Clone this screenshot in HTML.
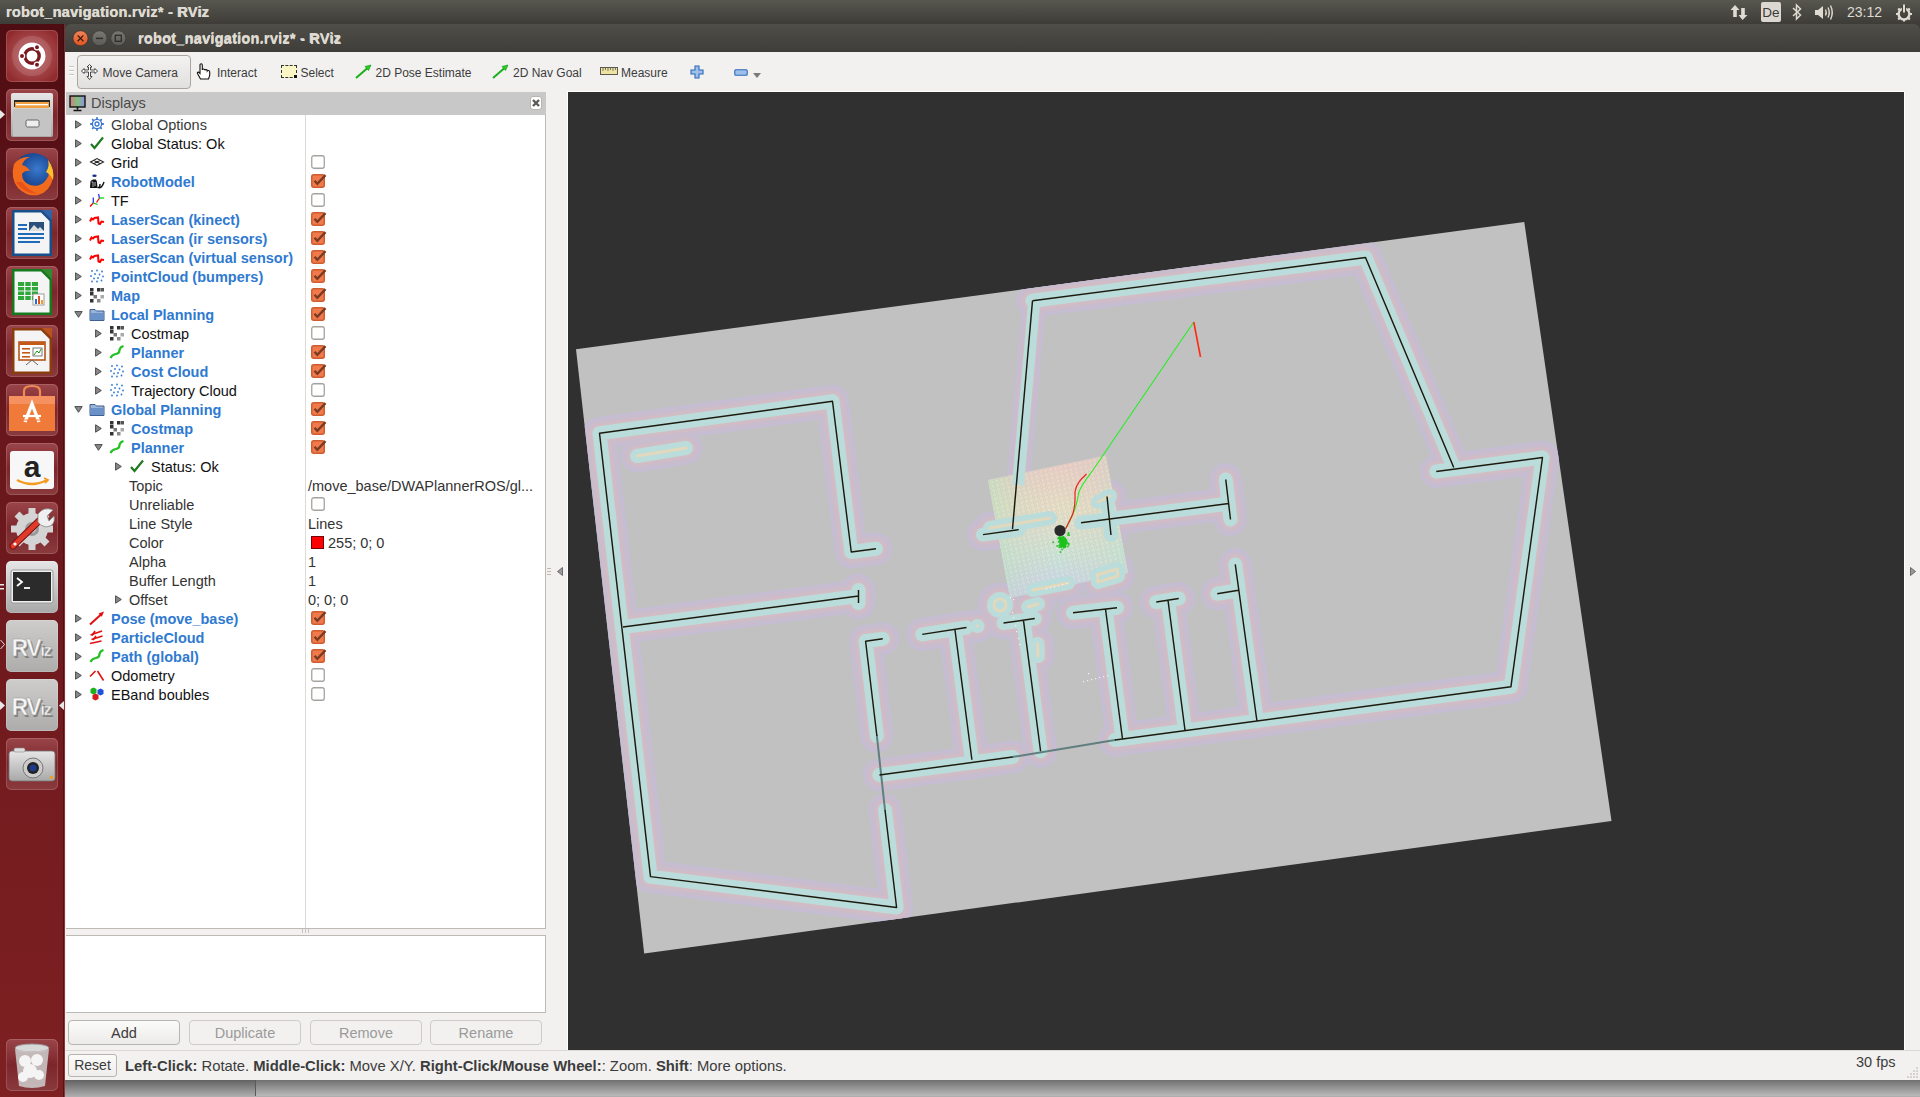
<!DOCTYPE html>
<html><head><meta charset="utf-8">
<style>
*{box-sizing:border-box;margin:0;padding:0}
html,body{width:1920px;height:1097px;overflow:hidden;background:#8a8a8a;font-family:"Liberation Sans",sans-serif}
.a{position:absolute}
#panel{left:0;top:0;width:1920px;height:24px;background:linear-gradient(#57564f,#3d3c37)}
#ptitle{left:6px;top:3px;font-size:15px;font-weight:bold;color:#dcd8cf;white-space:nowrap}
#launcher{left:0;top:24px;width:65px;height:1073px;background:linear-gradient(90deg,#6e1a1e 0,#7b1f22 60px,#9a3a3a 64px,#5a1014 65px)}
.tile{position:absolute;left:6px;width:52px;height:52px;border-radius:5px;background:linear-gradient(#a4474a,#85282d);box-shadow:inset 0 0 0 1px rgba(255,255,255,.12)}
#win{left:65px;top:24px;width:1855px;height:1056px;background:#f2f1f0}
#wtitle{left:65px;top:24px;width:1855px;height:28px;background:linear-gradient(#4f4e48,#3e3d39);border-radius:6px 6px 0 0}
#wtitletext{left:138px;top:29px;font-size:15px;font-weight:bold;color:#dcd8cf;white-space:nowrap}
.wb{position:absolute;top:31px;width:15px;height:15px;border-radius:50%}
#toolbar{left:65px;top:52px;width:1855px;height:40px;background:#f2f1f0}
.tb{position:absolute;top:63px;font-size:12px;color:#3c3c3c;white-space:nowrap}
#dheader{left:66px;top:92px;width:480px;height:23px;background:#c8c8c8}
#tree{left:66px;top:115px;width:480px;height:814px;background:#fff;border-right:1px solid #bdb9b4;border-bottom:1px solid #bdb9b4}
#help{left:66px;top:935px;width:480px;height:78px;background:#fff;border-top:1px solid #bdb9b4;border-right:1px solid #bdb9b4;border-bottom:1px solid #bdb9b4}
.btn{position:absolute;top:1020px;height:25px;border:1px solid #b8b4ae;border-radius:4px;background:linear-gradient(#fbfbfa,#ecebe9);font-size:14.5px;text-align:center;line-height:24px;color:#3c3c3c}
.btn.dis{color:#9a9a9a;border-color:#cfcbc6;background:#f2f1f0}
#view{left:568px;top:92px;width:1336px;height:958px;background:#303030}
#status{left:65px;top:1050px;width:1855px;height:30px;background:#f2f1f0;border-top:1px solid #dcd9d5}
.row{position:absolute;height:19px;font-size:14.5px;line-height:19px;white-space:nowrap;color:#111}
.b{font-weight:bold;color:#2f7ad0}
.arr{position:absolute;width:0;height:0;border-top:5px solid transparent;border-bottom:5px solid transparent;border-left:6px solid #555}
.arrd{position:absolute;width:0;height:0;border-left:5px solid transparent;border-right:5px solid transparent;border-top:6px solid #555}
.cb{position:absolute;left:311px;width:13px;height:13px;border:1px solid #a9a59f;border-radius:2px;background:#fff}
.cb.on{background:#e8784c;border-color:#b8532c}
</style></head><body>
<div id="panel" class="a"></div>
<div id="ptitle" class="a">robot_navigation.rviz* - RViz</div>
<!--LAUNCHSTART--><svg class="a" style="left:0;top:24px" width="65" height="1073" viewBox="0 24 65 1073">
<defs>
<linearGradient id="lbg" x1="0" y1="0" x2="0" y2="1"><stop offset="0" stop-color="#4e0d12"/><stop offset=".3" stop-color="#66161b"/><stop offset="1" stop-color="#7e2022"/></linearGradient>
<linearGradient id="tbg" x1="0" y1="0" x2="0" y2="1"><stop offset="0" stop-color="#9a4549"/><stop offset=".5" stop-color="#7c262b"/><stop offset="1" stop-color="#8a3a3d"/></linearGradient>
<radialGradient id="ubg" cx=".5" cy=".5" r=".6"><stop offset="0" stop-color="#c26a6c"/><stop offset="1" stop-color="#8f2a2e"/></radialGradient>
<linearGradient id="grey" x1="0" y1="0" x2="0" y2="1"><stop offset="0" stop-color="#e6e6e6"/><stop offset="1" stop-color="#a8a8a8"/></linearGradient>
<linearGradient id="rvbg" x1="0" y1="0" x2="0" y2="1"><stop offset="0" stop-color="#cfcdcb"/><stop offset="1" stop-color="#aeacaa"/></linearGradient>
<radialGradient id="ff" cx=".6" cy=".4" r=".6"><stop offset="0" stop-color="#3a7ad0"/><stop offset=".6" stop-color="#1f4e9a"/><stop offset="1" stop-color="#1a3a7a"/></radialGradient>
</defs>
<rect x="0" y="24" width="65" height="1073" fill="url(#lbg)"/>
<rect x="63" y="24" width="1" height="1073" fill="#3a0a0c" opacity=".6"/><rect x="64" y="24" width="1" height="1073" fill="#a05050" opacity=".5"/>
<rect x="6" y="30" width="52" height="52" rx="5" fill="url(#ubg)"/><rect x="6.5" y="30.5" width="51" height="51" rx="5" fill="none" stroke="#fff" stroke-opacity=".15"/>
<circle cx="32" cy="56" r="17" fill="none" stroke="#fff" stroke-opacity=".12" stroke-width="6"/>
<circle cx="32" cy="56" r="13.5" fill="#fff"/><circle cx="32" cy="56" r="7.2" fill="none" stroke="#7a1a1e" stroke-width="3.4"/>
<circle cx="22" cy="56" r="2.6" fill="#7a1a1e" stroke="#fff" stroke-width="1.2"/>
<circle cx="37" cy="47.3" r="2.6" fill="#7a1a1e" stroke="#fff" stroke-width="1.2"/>
<circle cx="37" cy="64.7" r="2.6" fill="#7a1a1e" stroke="#fff" stroke-width="1.2"/>
<rect x="6" y="89" width="52" height="52" rx="5" fill="url(#tbg)"/><rect x="6.5" y="89.5" width="51" height="51" rx="5" fill="none" stroke="#fff" stroke-opacity=".15"/>
<rect x="11" y="93" width="42" height="44" rx="2" fill="url(#grey)"/><rect x="14" y="100" width="36" height="7" fill="#2a2a2a"/><rect x="15" y="102" width="34" height="6" fill="#f0a040"/><rect x="16" y="104" width="32" height="1.3" fill="#fff"/>
<rect x="13" y="109" width="38" height="27" fill="#c4c4c4"/><rect x="26" y="120" width="13" height="7" rx="1.5" fill="#eee" stroke="#666" stroke-width="1"/>
<rect x="6" y="148" width="52" height="52" rx="5" fill="url(#tbg)"/><rect x="6.5" y="148.5" width="51" height="51" rx="5" fill="none" stroke="#fff" stroke-opacity=".15"/>
<circle cx="33" cy="173" r="20" fill="url(#ff)"/><path d="M14 164 Q10 178 18 188 Q27 197 38 195 Q50 192 53 178 Q54 168 48 160 Q52 172 46 180 Q40 188 30 185 Q22 182 22 174 Q25 170 30 171 Q27 166 22 165 Q24 159 30 157 Q20 156 14 164 Z" fill="#f26b1d"/><path d="M48 160 Q55 170 53 180 Q50 174 46 172 Q50 166 48 160 Z" fill="#ffc02a"/><path d="M16 182 Q24 194 38 194 Q28 190 22 182 Z" fill="#e8501a"/>
<rect x="6" y="207" width="52" height="52" rx="5" fill="url(#tbg)"/><rect x="6.5" y="207.5" width="51" height="51" rx="5" fill="none" stroke="#fff" stroke-opacity=".15"/>
<path d="M12 210 H42 L52 220 V256 H12 Z" fill="#174f8a"/><path d="M14.5 212.5 H41 L49.5 221 V253.5 H14.5 Z" fill="#f4f4f4"/><path d="M42 210 L52 210 L52 220 Z" fill="#1f6bb8" opacity=".85"/>
<g fill="#1f6bb8"><rect x="18" y="224" width="9" height="2"/><rect x="18" y="228" width="9" height="2"/><rect x="18" y="233" width="26" height="2"/><rect x="18" y="237" width="26" height="2"/><rect x="18" y="241" width="22" height="2"/></g><rect x="29" y="222" width="15" height="9" fill="#2a4f7a"/><path d="M29 231 L34 225 L38 229 L40 227 L44 231 Z" fill="#ddd"/>
<rect x="6" y="266" width="52" height="52" rx="5" fill="url(#tbg)"/><rect x="6.5" y="266.5" width="51" height="51" rx="5" fill="none" stroke="#fff" stroke-opacity=".15"/>
<path d="M12 269 H42 L52 279 V315 H12 Z" fill="#137a1e"/><path d="M14.5 271.5 H41 L49.5 280 V312.5 H14.5 Z" fill="#f4f4f4"/><path d="M42 269 L52 269 L52 279 Z" fill="#1e9a2a" opacity=".85"/>
<g fill="#2ea83a"><rect x="18" y="282" width="20" height="18"/></g><g stroke="#f4f4f4" stroke-width="1.2"><path d="M18 286.5 H38 M18 291 H38 M18 295.5 H38 M24.7 282 V300 M31.3 282 V300"/></g><rect x="33" y="294" width="11" height="11" fill="#fff" stroke="#888" stroke-width=".8"/><rect x="35" y="299" width="2" height="5" fill="#2a6ad0"/><rect x="38" y="296" width="2" height="8" fill="#e05020"/><rect x="41" y="300" width="2" height="4" fill="#f0a020"/>
<rect x="6" y="325" width="52" height="52" rx="5" fill="url(#tbg)"/><rect x="6.5" y="325.5" width="51" height="51" rx="5" fill="none" stroke="#fff" stroke-opacity=".15"/>
<path d="M12 328 H42 L52 338 V374 H12 Z" fill="#8a3e10"/><path d="M14.5 330.5 H41 L49.5 339 V371.5 H14.5 Z" fill="#f4f4f4"/><path d="M42 328 L52 328 L52 338 Z" fill="#c0581a" opacity=".85"/>
<rect x="19" y="342" width="26" height="18" fill="#fff" stroke="#b5551c" stroke-width="1.6"/><rect x="19" y="342" width="26" height="3" fill="#c45a1a"/><g fill="#c45a1a"><rect x="22" y="348" width="8" height="1.6"/><rect x="22" y="352" width="8" height="1.6"/><rect x="22" y="356" width="8" height="1.6"/></g><rect x="33" y="348" width="9" height="8" fill="#fff" stroke="#555" stroke-width=".8"/><path d="M34 355 L37 351 L39 353 L41 349" stroke="#1a9a1a" fill="none" stroke-width="1"/><path d="M32 360 L26 365 M32 360 L38 365" stroke="#666" stroke-width="1"/>
<rect x="6" y="384" width="52" height="52" rx="5" fill="url(#tbg)"/><rect x="6.5" y="384.5" width="51" height="51" rx="5" fill="none" stroke="#fff" stroke-opacity=".15"/>
<path d="M24 396 V391 Q24 386 32 386 Q40 386 40 391 V396" fill="none" stroke="#f08a50" stroke-width="2.2"/><path d="M9 396 H55 V431 H9 Z" fill="#f07a3a"/><path d="M9 396 H55 V404 H9 Z" fill="#f59060"/><path d="M25 422 L32 404 L39 422" fill="none" stroke="#fff" stroke-width="3.4"/><path d="M23 416 H41" stroke="#fff" stroke-width="2.2"/><path d="M22 420 H42" stroke="#f07a3a" stroke-width="1"/>
<rect x="6" y="443" width="52" height="52" rx="5" fill="url(#tbg)"/><rect x="6.5" y="443.5" width="51" height="51" rx="5" fill="none" stroke="#fff" stroke-opacity=".15"/>
<rect x="10" y="451" width="44" height="38" rx="3" fill="#f7f7f7"/><text x="32" y="477" font-family="Liberation Sans" font-weight="bold" font-size="30" text-anchor="middle" fill="#222">a</text><path d="M17 480 Q32 488 47 480" fill="none" stroke="#f59a1e" stroke-width="2.4"/><path d="M44 478 L48 480 L45 483" fill="none" stroke="#f59a1e" stroke-width="1.8"/>
<rect x="6" y="502" width="52" height="52" rx="5" fill="url(#tbg)"/><rect x="6.5" y="502.5" width="51" height="51" rx="5" fill="none" stroke="#fff" stroke-opacity=".15"/>
<g fill="#d4d4d4"><circle cx="32" cy="529" r="16"/></g><g stroke="#d4d4d4" stroke-width="7"><path d="M32 508 V550 M11 529 H53 M17 514 L47 544 M17 544 L47 514"/></g><circle cx="32" cy="529" r="7" fill="#9a9a9a"/><circle cx="32" cy="529" r="4" fill="#bdbdbd"/><path d="M13 546 L40 520" stroke="#7a1010" stroke-width="7" stroke-linecap="round"/><path d="M13 546 L40 520" stroke="#e03a2a" stroke-width="5" stroke-linecap="round"/><path d="M38 514 Q44 506 53 510 L47 516 L49 521 L54 516 Q56 526 46 527 Q40 526 38 522 Z" fill="#f0f0f0" stroke="#888" stroke-width=".8"/><circle cx="15" cy="544" r="1.6" fill="#fff"/>
<rect x="6" y="561" width="52" height="52" rx="5" fill="url(#grey)"/><rect x="6.5" y="561.5" width="51" height="51" rx="5" fill="none" stroke="#fff" stroke-opacity=".15"/>
<rect x="11" y="570" width="42" height="33" rx="2" fill="#f0f0f0" stroke="#999" stroke-width="1"/><rect x="13" y="572" width="38" height="29" fill="#2b2b2b"/><path d="M17 578 L22 582 L17 586" fill="none" stroke="#fff" stroke-width="1.8"/><path d="M24 588 H30" stroke="#fff" stroke-width="1.8"/>
<rect x="6" y="620" width="52" height="52" rx="5" fill="url(#rvbg)"/><rect x="6.5" y="620.5" width="51" height="51" rx="5" fill="none" stroke="#fff" stroke-opacity=".15"/>
<text x="31" y="656" font-family="Liberation Sans" font-weight="bold" font-size="23" text-anchor="middle" fill="#555" opacity=".55" letter-spacing="-1.5" transform="translate(1.5,1.5)">RV<tspan font-size="17">iz</tspan></text><text x="31" y="656" font-family="Liberation Sans" font-weight="bold" font-size="23" text-anchor="middle" fill="#f6f6f6" stroke="#9a9a9a" stroke-width=".5" letter-spacing="-1.5">RV<tspan font-size="17">iz</tspan></text>
<rect x="6" y="679" width="52" height="52" rx="5" fill="url(#rvbg)"/><rect x="6.5" y="679.5" width="51" height="51" rx="5" fill="none" stroke="#fff" stroke-opacity=".15"/>
<text x="31" y="715" font-family="Liberation Sans" font-weight="bold" font-size="23" text-anchor="middle" fill="#555" opacity=".55" letter-spacing="-1.5" transform="translate(1.5,1.5)">RV<tspan font-size="17">iz</tspan></text><text x="31" y="715" font-family="Liberation Sans" font-weight="bold" font-size="23" text-anchor="middle" fill="#f6f6f6" stroke="#9a9a9a" stroke-width=".5" letter-spacing="-1.5">RV<tspan font-size="17">iz</tspan></text>
<rect x="6" y="738" width="52" height="52" rx="5" fill="url(#tbg)"/><rect x="6.5" y="738.5" width="51" height="51" rx="5" fill="none" stroke="#fff" stroke-opacity=".15"/>
<rect x="9" y="751" width="46" height="30" rx="3" fill="url(#grey)" stroke="#777" stroke-width=".8"/><rect x="14" y="748" width="11" height="4" rx="1.5" fill="#ddd" stroke="#888" stroke-width=".6"/><circle cx="33" cy="768" r="10" fill="#ccc" stroke="#777" stroke-width="1"/><circle cx="33" cy="768" r="6" fill="#222"/><circle cx="33" cy="768" r="3.5" fill="#1a3a8a"/><rect x="50" y="776" width="3" height="3" fill="#f0a020"/>
<rect x="6" y="1039" width="52" height="52" rx="5" fill="url(#tbg)"/><rect x="6.5" y="1039.5" width="51" height="51" rx="5" fill="none" stroke="#fff" stroke-opacity=".15"/>
<ellipse cx="32" cy="1048" rx="17" ry="4" fill="#d8d8d8" stroke="#999" stroke-width="1"/><path d="M15 1049 L19 1086 Q32 1090 45 1086 L49 1049 Q32 1054 15 1049 Z" fill="#cfcfcf" opacity=".85"/><g fill="#f4f4f4"><circle cx="25" cy="1061" r="6"/><circle cx="37" cy="1060" r="6"/><circle cx="30" cy="1071" r="7"/><circle cx="39" cy="1075" r="5"/><circle cx="23" cy="1077" r="5"/></g>
<path d="M0 110 L5 114.5 L0 119 Z" fill="#e8e8e8"/>
<g fill="#e8e8e8"><rect x="0" y="584" width="4" height="1.5"/><rect x="0" y="588" width="4" height="1.5"/></g>
<path d="M.5 640 L4.5 644.5 L.5 649" fill="none" stroke="#e0e0e0" stroke-width="1"/>
<path d="M0 701 L5 705.5 L0 710 Z" fill="#e8e8e8"/><path d="M64 701 L59 705.5 L64 710 Z" fill="#e8e8e8"/>
</svg><!--LAUNCHEND-->
<div class="a" style="left:65px;top:24px;width:1855px;height:28px;background:#3d3c38"></div>
<div id="win" class="a" style="top:52px;height:1028px"></div>
<div id="wtitle" class="a"></div>
<div id="wtitletext" class="a">robot_navigation.rviz* - RViz</div>
<div id="toolbar" class="a"></div>
<div id="dheader" class="a"></div>
<div id="tree" class="a"></div>
<div id="help" class="a"></div>
<div class="a" style="left:305px;top:115px;width:1px;height:813px;background:#dedbd7"></div>
<!--TREESTART--><svg class="a" style="left:75px;top:119.5px" width="7" height="9" viewBox="0 0 7 9"><path d="M.6 .8 L6.3 4.5 L.6 8.2 Z" fill="#8a8a8a" stroke="#4a4a4a" stroke-width="1"/></svg>
<div class="a" style="left:89px;top:116px;width:16px;height:16px"><svg width="16" height="16" viewBox="0 0 16 16"><g fill="none" stroke="#3d78d0" stroke-width="1.3"><circle cx="8" cy="8" r="4.6"/><circle cx="8" cy="8" r="2"/></g><g stroke="#3d78d0" stroke-width="1.8"><path d="M8 1.2V3.2M8 12.8V14.8M1.2 8H3.2M12.8 8H14.8M3.2 3.2L4.6 4.6M11.4 11.4L12.8 12.8M3.2 12.8L4.6 11.4M11.4 4.6L12.8 3.2"/></g></svg></div>
<div class="row" style="left:111px;top:115.5px;color:#3a3a3a;">Global Options</div>
<svg class="a" style="left:75px;top:138.5px" width="7" height="9" viewBox="0 0 7 9"><path d="M.6 .8 L6.3 4.5 L.6 8.2 Z" fill="#8a8a8a" stroke="#4a4a4a" stroke-width="1"/></svg>
<div class="a" style="left:89px;top:135px;width:16px;height:16px"><svg width="16" height="16" viewBox="0 0 16 16"><path d="M2 9 L5.5 13 L14 2.5" fill="none" stroke="#1f7a1f" stroke-width="2.2"/></svg></div>
<div class="row" style="left:111px;top:134.5px;">Global Status: Ok</div>
<svg class="a" style="left:75px;top:157.5px" width="7" height="9" viewBox="0 0 7 9"><path d="M.6 .8 L6.3 4.5 L.6 8.2 Z" fill="#8a8a8a" stroke="#4a4a4a" stroke-width="1"/></svg>
<div class="a" style="left:89px;top:154px;width:16px;height:16px"><svg width="16" height="16" viewBox="0 0 16 16"><g fill="none" stroke="#222" stroke-width="1.1"><path d="M1.5 8 L8 4.5 L14.5 8 L8 11.5 Z M4.7 6.3 L11.3 9.7 M11.3 6.3 L4.7 9.7"/></g></svg></div>
<div class="row" style="left:111px;top:153.5px;">Grid</div>
<div class="a" style="left:311px;top:155px;width:14px;height:14px"><svg width="14" height="14" viewBox="0 0 14 14"><rect x=".75" y=".75" width="12.5" height="12.5" rx="2" fill="#fff" stroke="#a6a39e" stroke-width="1.3"/></svg></div>
<svg class="a" style="left:75px;top:176.5px" width="7" height="9" viewBox="0 0 7 9"><path d="M.6 .8 L6.3 4.5 L.6 8.2 Z" fill="#8a8a8a" stroke="#4a4a4a" stroke-width="1"/></svg>
<div class="a" style="left:89px;top:173px;width:16px;height:16px"><svg width="16" height="16" viewBox="0 0 16 16"><ellipse cx="5.5" cy="2.8" rx="2.2" ry="1.3" fill="#1c2c8c"/><path d="M1 15 L1.5 8 L4 6.5 L7 6.5 L8 9 L8.5 15 Z" fill="#111"/><path d="M2.5 9 L4 9 L4 14 M6 9 L6 13" stroke="#fff" stroke-width=".7"/><path d="M8.5 14.5 Q11 15 11 11 M10 14.8 Q13 15 15 9" fill="none" stroke="#111" stroke-width="1.4"/></svg></div>
<div class="row b" style="left:111px;top:172.5px;">RobotModel</div>
<div class="a" style="left:311px;top:174px;width:16px;height:16px"><svg width="16" height="16" viewBox="0 0 16 16"><rect x=".75" y=".75" width="12.5" height="12.5" rx="2" fill="#f07a4c" stroke="#cf5c2e" stroke-width="1.5"/><path d="M3.5 6.8 L6.3 9.8 L14.5 1.2" fill="none" stroke="#7b3b22" stroke-width="2.4"/></svg></div>
<svg class="a" style="left:75px;top:195.5px" width="7" height="9" viewBox="0 0 7 9"><path d="M.6 .8 L6.3 4.5 L.6 8.2 Z" fill="#8a8a8a" stroke="#4a4a4a" stroke-width="1"/></svg>
<div class="a" style="left:89px;top:192px;width:16px;height:16px"><svg width="16" height="16" viewBox="0 0 16 16"><g stroke-width="1.3" fill="none"><path d="M1 14.5 L4.3 11" stroke="#f00"/><path d="M4.3 11 L4.3 5.5" stroke="#33f"/><path d="M4.3 11 L8.5 12.5" stroke="#0c0"/><path d="M7.5 10.5 L10.5 6" stroke="#f00"/><path d="M10.5 6 L9.5 2" stroke="#33f"/><path d="M10.5 6 L15 6" stroke="#0d0"/></g></svg></div>
<div class="row" style="left:111px;top:191.5px;">TF</div>
<div class="a" style="left:311px;top:193px;width:14px;height:14px"><svg width="14" height="14" viewBox="0 0 14 14"><rect x=".75" y=".75" width="12.5" height="12.5" rx="2" fill="#fff" stroke="#a6a39e" stroke-width="1.3"/></svg></div>
<svg class="a" style="left:75px;top:214.5px" width="7" height="9" viewBox="0 0 7 9"><path d="M.6 .8 L6.3 4.5 L.6 8.2 Z" fill="#8a8a8a" stroke="#4a4a4a" stroke-width="1"/></svg>
<div class="a" style="left:89px;top:211px;width:16px;height:16px"><svg width="16" height="16" viewBox="0 0 16 16"><path d="M1 10.5 L2.5 7.5 L4 8.5 L5.5 7 L9 6.5 L9.5 12.5 L11 13 L12.5 10.5 L15 11" fill="none" stroke="#f00" stroke-width="2"/></svg></div>
<div class="row b" style="left:111px;top:210.5px;">LaserScan (kinect)</div>
<div class="a" style="left:311px;top:212px;width:16px;height:16px"><svg width="16" height="16" viewBox="0 0 16 16"><rect x=".75" y=".75" width="12.5" height="12.5" rx="2" fill="#f07a4c" stroke="#cf5c2e" stroke-width="1.5"/><path d="M3.5 6.8 L6.3 9.8 L14.5 1.2" fill="none" stroke="#7b3b22" stroke-width="2.4"/></svg></div>
<svg class="a" style="left:75px;top:233.5px" width="7" height="9" viewBox="0 0 7 9"><path d="M.6 .8 L6.3 4.5 L.6 8.2 Z" fill="#8a8a8a" stroke="#4a4a4a" stroke-width="1"/></svg>
<div class="a" style="left:89px;top:230px;width:16px;height:16px"><svg width="16" height="16" viewBox="0 0 16 16"><path d="M1 10.5 L2.5 7.5 L4 8.5 L5.5 7 L9 6.5 L9.5 12.5 L11 13 L12.5 10.5 L15 11" fill="none" stroke="#f00" stroke-width="2"/></svg></div>
<div class="row b" style="left:111px;top:229.5px;">LaserScan (ir sensors)</div>
<div class="a" style="left:311px;top:231px;width:16px;height:16px"><svg width="16" height="16" viewBox="0 0 16 16"><rect x=".75" y=".75" width="12.5" height="12.5" rx="2" fill="#f07a4c" stroke="#cf5c2e" stroke-width="1.5"/><path d="M3.5 6.8 L6.3 9.8 L14.5 1.2" fill="none" stroke="#7b3b22" stroke-width="2.4"/></svg></div>
<svg class="a" style="left:75px;top:252.5px" width="7" height="9" viewBox="0 0 7 9"><path d="M.6 .8 L6.3 4.5 L.6 8.2 Z" fill="#8a8a8a" stroke="#4a4a4a" stroke-width="1"/></svg>
<div class="a" style="left:89px;top:249px;width:16px;height:16px"><svg width="16" height="16" viewBox="0 0 16 16"><path d="M1 10.5 L2.5 7.5 L4 8.5 L5.5 7 L9 6.5 L9.5 12.5 L11 13 L12.5 10.5 L15 11" fill="none" stroke="#f00" stroke-width="2"/></svg></div>
<div class="row b" style="left:111px;top:248.5px;">LaserScan (virtual sensor)</div>
<div class="a" style="left:311px;top:250px;width:16px;height:16px"><svg width="16" height="16" viewBox="0 0 16 16"><rect x=".75" y=".75" width="12.5" height="12.5" rx="2" fill="#f07a4c" stroke="#cf5c2e" stroke-width="1.5"/><path d="M3.5 6.8 L6.3 9.8 L14.5 1.2" fill="none" stroke="#7b3b22" stroke-width="2.4"/></svg></div>
<svg class="a" style="left:75px;top:271.5px" width="7" height="9" viewBox="0 0 7 9"><path d="M.6 .8 L6.3 4.5 L.6 8.2 Z" fill="#8a8a8a" stroke="#4a4a4a" stroke-width="1"/></svg>
<div class="a" style="left:89px;top:268px;width:16px;height:16px"><svg width="16" height="16" viewBox="0 0 16 16"><g fill="#2f7ad8"><circle cx="3" cy="3" r=".9"/><circle cx="8" cy="2.5" r=".9"/><circle cx="13" cy="3.5" r=".9"/><circle cx="2" cy="8" r=".9"/><circle cx="6" cy="6" r=".9"/><circle cx="10.5" cy="6.5" r=".9"/><circle cx="14" cy="8.5" r=".9"/><circle cx="5" cy="10.5" r=".9"/><circle cx="9" cy="10" r=".9"/><circle cx="3" cy="13.5" r=".9"/><circle cx="8" cy="13.5" r=".9"/><circle cx="12.5" cy="12.5" r=".9"/></g></svg></div>
<div class="row b" style="left:111px;top:267.5px;">PointCloud (bumpers)</div>
<div class="a" style="left:311px;top:269px;width:16px;height:16px"><svg width="16" height="16" viewBox="0 0 16 16"><rect x=".75" y=".75" width="12.5" height="12.5" rx="2" fill="#f07a4c" stroke="#cf5c2e" stroke-width="1.5"/><path d="M3.5 6.8 L6.3 9.8 L14.5 1.2" fill="none" stroke="#7b3b22" stroke-width="2.4"/></svg></div>
<svg class="a" style="left:75px;top:290.5px" width="7" height="9" viewBox="0 0 7 9"><path d="M.6 .8 L6.3 4.5 L.6 8.2 Z" fill="#8a8a8a" stroke="#4a4a4a" stroke-width="1"/></svg>
<div class="a" style="left:89px;top:287px;width:16px;height:16px"><svg width="16" height="16" viewBox="0 0 16 16"><g fill="#333"><rect x="1" y="1" width="3.5" height="3.5"/><rect x="8" y="1" width="3.5" height="3.5"/><rect x="12" y="1" width="3" height="3.5" fill="#555"/><rect x="1" y="5" width="3.5" height="3.5"/><rect x="4.5" y="8" width="3.5" height="3.5" fill="#777"/><rect x="1" y="12" width="3.5" height="3.5"/><rect x="8" y="12" width="3.5" height="3.5" fill="#888"/><rect x="11.5" y="8" width="3.5" height="3.5" fill="#aaa"/></g></svg></div>
<div class="row b" style="left:111px;top:286.5px;">Map</div>
<div class="a" style="left:311px;top:288px;width:16px;height:16px"><svg width="16" height="16" viewBox="0 0 16 16"><rect x=".75" y=".75" width="12.5" height="12.5" rx="2" fill="#f07a4c" stroke="#cf5c2e" stroke-width="1.5"/><path d="M3.5 6.8 L6.3 9.8 L14.5 1.2" fill="none" stroke="#7b3b22" stroke-width="2.4"/></svg></div>
<svg class="a" style="left:74px;top:310.5px" width="9" height="7" viewBox="0 0 9 7"><path d="M.8 .6 L8.2 .6 L4.5 6.3 Z" fill="#8a8a8a" stroke="#4a4a4a" stroke-width="1"/></svg>
<div class="a" style="left:89px;top:306px;width:16px;height:16px"><svg width="16" height="16" viewBox="0 0 16 16"><path d="M1 3.5 H6 L7.5 5 H15 V14.5 H1 Z" fill="#9ab4d8" stroke="#3e5f90" stroke-width="1"/><path d="M1.5 7 H14.5 V14 H1.5 Z" fill="#6a92c8"/></svg></div>
<div class="row b" style="left:111px;top:305.5px;">Local Planning</div>
<div class="a" style="left:311px;top:307px;width:16px;height:16px"><svg width="16" height="16" viewBox="0 0 16 16"><rect x=".75" y=".75" width="12.5" height="12.5" rx="2" fill="#f07a4c" stroke="#cf5c2e" stroke-width="1.5"/><path d="M3.5 6.8 L6.3 9.8 L14.5 1.2" fill="none" stroke="#7b3b22" stroke-width="2.4"/></svg></div>
<svg class="a" style="left:95px;top:328.5px" width="7" height="9" viewBox="0 0 7 9"><path d="M.6 .8 L6.3 4.5 L.6 8.2 Z" fill="#8a8a8a" stroke="#4a4a4a" stroke-width="1"/></svg>
<div class="a" style="left:109px;top:325px;width:16px;height:16px"><svg width="16" height="16" viewBox="0 0 16 16"><g fill="#333"><rect x="1" y="1" width="3.5" height="3.5"/><rect x="8" y="1" width="3.5" height="3.5"/><rect x="12" y="1" width="3" height="3.5" fill="#555"/><rect x="1" y="5" width="3.5" height="3.5"/><rect x="4.5" y="8" width="3.5" height="3.5" fill="#777"/><rect x="1" y="12" width="3.5" height="3.5"/><rect x="8" y="12" width="3.5" height="3.5" fill="#888"/><rect x="11.5" y="8" width="3.5" height="3.5" fill="#aaa"/></g></svg></div>
<div class="row" style="left:131px;top:324.5px;">Costmap</div>
<div class="a" style="left:311px;top:326px;width:14px;height:14px"><svg width="14" height="14" viewBox="0 0 14 14"><rect x=".75" y=".75" width="12.5" height="12.5" rx="2" fill="#fff" stroke="#a6a39e" stroke-width="1.3"/></svg></div>
<svg class="a" style="left:95px;top:347.5px" width="7" height="9" viewBox="0 0 7 9"><path d="M.6 .8 L6.3 4.5 L.6 8.2 Z" fill="#8a8a8a" stroke="#4a4a4a" stroke-width="1"/></svg>
<div class="a" style="left:109px;top:344px;width:16px;height:16px"><svg width="16" height="16" viewBox="0 0 16 16"><path d="M1.5 14 Q3 10.5 7 10 Q10.5 9.5 10.5 6 Q11 3 14.5 2" fill="none" stroke="#22c022" stroke-width="2.2"/></svg></div>
<div class="row b" style="left:131px;top:343.5px;">Planner</div>
<div class="a" style="left:311px;top:345px;width:16px;height:16px"><svg width="16" height="16" viewBox="0 0 16 16"><rect x=".75" y=".75" width="12.5" height="12.5" rx="2" fill="#f07a4c" stroke="#cf5c2e" stroke-width="1.5"/><path d="M3.5 6.8 L6.3 9.8 L14.5 1.2" fill="none" stroke="#7b3b22" stroke-width="2.4"/></svg></div>
<svg class="a" style="left:95px;top:366.5px" width="7" height="9" viewBox="0 0 7 9"><path d="M.6 .8 L6.3 4.5 L.6 8.2 Z" fill="#8a8a8a" stroke="#4a4a4a" stroke-width="1"/></svg>
<div class="a" style="left:109px;top:363px;width:16px;height:16px"><svg width="16" height="16" viewBox="0 0 16 16"><g fill="#2f7ad8"><circle cx="3" cy="3" r=".9"/><circle cx="8" cy="2.5" r=".9"/><circle cx="13" cy="3.5" r=".9"/><circle cx="2" cy="8" r=".9"/><circle cx="6" cy="6" r=".9"/><circle cx="10.5" cy="6.5" r=".9"/><circle cx="14" cy="8.5" r=".9"/><circle cx="5" cy="10.5" r=".9"/><circle cx="9" cy="10" r=".9"/><circle cx="3" cy="13.5" r=".9"/><circle cx="8" cy="13.5" r=".9"/><circle cx="12.5" cy="12.5" r=".9"/></g></svg></div>
<div class="row b" style="left:131px;top:362.5px;">Cost Cloud</div>
<div class="a" style="left:311px;top:364px;width:16px;height:16px"><svg width="16" height="16" viewBox="0 0 16 16"><rect x=".75" y=".75" width="12.5" height="12.5" rx="2" fill="#f07a4c" stroke="#cf5c2e" stroke-width="1.5"/><path d="M3.5 6.8 L6.3 9.8 L14.5 1.2" fill="none" stroke="#7b3b22" stroke-width="2.4"/></svg></div>
<svg class="a" style="left:95px;top:385.5px" width="7" height="9" viewBox="0 0 7 9"><path d="M.6 .8 L6.3 4.5 L.6 8.2 Z" fill="#8a8a8a" stroke="#4a4a4a" stroke-width="1"/></svg>
<div class="a" style="left:109px;top:382px;width:16px;height:16px"><svg width="16" height="16" viewBox="0 0 16 16"><g fill="#2f7ad8"><circle cx="3" cy="3" r=".9"/><circle cx="8" cy="2.5" r=".9"/><circle cx="13" cy="3.5" r=".9"/><circle cx="2" cy="8" r=".9"/><circle cx="6" cy="6" r=".9"/><circle cx="10.5" cy="6.5" r=".9"/><circle cx="14" cy="8.5" r=".9"/><circle cx="5" cy="10.5" r=".9"/><circle cx="9" cy="10" r=".9"/><circle cx="3" cy="13.5" r=".9"/><circle cx="8" cy="13.5" r=".9"/><circle cx="12.5" cy="12.5" r=".9"/></g></svg></div>
<div class="row" style="left:131px;top:381.5px;">Trajectory Cloud</div>
<div class="a" style="left:311px;top:383px;width:14px;height:14px"><svg width="14" height="14" viewBox="0 0 14 14"><rect x=".75" y=".75" width="12.5" height="12.5" rx="2" fill="#fff" stroke="#a6a39e" stroke-width="1.3"/></svg></div>
<svg class="a" style="left:74px;top:405.5px" width="9" height="7" viewBox="0 0 9 7"><path d="M.8 .6 L8.2 .6 L4.5 6.3 Z" fill="#8a8a8a" stroke="#4a4a4a" stroke-width="1"/></svg>
<div class="a" style="left:89px;top:401px;width:16px;height:16px"><svg width="16" height="16" viewBox="0 0 16 16"><path d="M1 3.5 H6 L7.5 5 H15 V14.5 H1 Z" fill="#9ab4d8" stroke="#3e5f90" stroke-width="1"/><path d="M1.5 7 H14.5 V14 H1.5 Z" fill="#6a92c8"/></svg></div>
<div class="row b" style="left:111px;top:400.5px;">Global Planning</div>
<div class="a" style="left:311px;top:402px;width:16px;height:16px"><svg width="16" height="16" viewBox="0 0 16 16"><rect x=".75" y=".75" width="12.5" height="12.5" rx="2" fill="#f07a4c" stroke="#cf5c2e" stroke-width="1.5"/><path d="M3.5 6.8 L6.3 9.8 L14.5 1.2" fill="none" stroke="#7b3b22" stroke-width="2.4"/></svg></div>
<svg class="a" style="left:95px;top:423.5px" width="7" height="9" viewBox="0 0 7 9"><path d="M.6 .8 L6.3 4.5 L.6 8.2 Z" fill="#8a8a8a" stroke="#4a4a4a" stroke-width="1"/></svg>
<div class="a" style="left:109px;top:420px;width:16px;height:16px"><svg width="16" height="16" viewBox="0 0 16 16"><g fill="#333"><rect x="1" y="1" width="3.5" height="3.5"/><rect x="8" y="1" width="3.5" height="3.5"/><rect x="12" y="1" width="3" height="3.5" fill="#555"/><rect x="1" y="5" width="3.5" height="3.5"/><rect x="4.5" y="8" width="3.5" height="3.5" fill="#777"/><rect x="1" y="12" width="3.5" height="3.5"/><rect x="8" y="12" width="3.5" height="3.5" fill="#888"/><rect x="11.5" y="8" width="3.5" height="3.5" fill="#aaa"/></g></svg></div>
<div class="row b" style="left:131px;top:419.5px;">Costmap</div>
<div class="a" style="left:311px;top:421px;width:16px;height:16px"><svg width="16" height="16" viewBox="0 0 16 16"><rect x=".75" y=".75" width="12.5" height="12.5" rx="2" fill="#f07a4c" stroke="#cf5c2e" stroke-width="1.5"/><path d="M3.5 6.8 L6.3 9.8 L14.5 1.2" fill="none" stroke="#7b3b22" stroke-width="2.4"/></svg></div>
<svg class="a" style="left:94px;top:443.5px" width="9" height="7" viewBox="0 0 9 7"><path d="M.8 .6 L8.2 .6 L4.5 6.3 Z" fill="#8a8a8a" stroke="#4a4a4a" stroke-width="1"/></svg>
<div class="a" style="left:109px;top:439px;width:16px;height:16px"><svg width="16" height="16" viewBox="0 0 16 16"><path d="M1.5 14 Q3 10.5 7 10 Q10.5 9.5 10.5 6 Q11 3 14.5 2" fill="none" stroke="#22c022" stroke-width="2.2"/></svg></div>
<div class="row b" style="left:131px;top:438.5px;">Planner</div>
<div class="a" style="left:311px;top:440px;width:16px;height:16px"><svg width="16" height="16" viewBox="0 0 16 16"><rect x=".75" y=".75" width="12.5" height="12.5" rx="2" fill="#f07a4c" stroke="#cf5c2e" stroke-width="1.5"/><path d="M3.5 6.8 L6.3 9.8 L14.5 1.2" fill="none" stroke="#7b3b22" stroke-width="2.4"/></svg></div>
<svg class="a" style="left:115px;top:461.5px" width="7" height="9" viewBox="0 0 7 9"><path d="M.6 .8 L6.3 4.5 L.6 8.2 Z" fill="#8a8a8a" stroke="#4a4a4a" stroke-width="1"/></svg>
<div class="a" style="left:129px;top:458px;width:16px;height:16px"><svg width="16" height="16" viewBox="0 0 16 16"><path d="M2 9 L5.5 13 L14 2.5" fill="none" stroke="#1f7a1f" stroke-width="2.2"/></svg></div>
<div class="row" style="left:151px;top:457.5px;">Status: Ok</div>
<div class="row" style="left:129px;top:476.5px;color:#333;">Topic</div>
<div class="row" style="left:308px;top:476.5px;color:#333">/move_base/DWAPlannerROS/gl...</div>
<div class="row" style="left:129px;top:495.5px;color:#333;">Unreliable</div>
<div class="a" style="left:311px;top:497px;width:14px;height:14px"><svg width="14" height="14" viewBox="0 0 14 14"><rect x=".75" y=".75" width="12.5" height="12.5" rx="2" fill="#fff" stroke="#a6a39e" stroke-width="1.3"/></svg></div>
<div class="row" style="left:129px;top:514.5px;color:#333;">Line Style</div>
<div class="row" style="left:308px;top:514.5px;color:#333">Lines</div>
<div class="row" style="left:129px;top:533.5px;color:#333;">Color</div>
<div class="a" style="left:311px;top:535.5px;width:13px;height:13px;background:#f00;border:1px solid #700"></div>
<div class="row" style="left:328px;top:533.5px;color:#333">255; 0; 0</div>
<div class="row" style="left:129px;top:552.5px;color:#333;">Alpha</div>
<div class="row" style="left:308px;top:552.5px;color:#333">1</div>
<div class="row" style="left:129px;top:571.5px;color:#333;">Buffer Length</div>
<div class="row" style="left:308px;top:571.5px;color:#333">1</div>
<svg class="a" style="left:115px;top:594.5px" width="7" height="9" viewBox="0 0 7 9"><path d="M.6 .8 L6.3 4.5 L.6 8.2 Z" fill="#8a8a8a" stroke="#4a4a4a" stroke-width="1"/></svg>
<div class="row" style="left:129px;top:590.5px;color:#333;">Offset</div>
<div class="row" style="left:308px;top:590.5px;color:#333">0; 0; 0</div>
<svg class="a" style="left:75px;top:613.5px" width="7" height="9" viewBox="0 0 7 9"><path d="M.6 .8 L6.3 4.5 L.6 8.2 Z" fill="#8a8a8a" stroke="#4a4a4a" stroke-width="1"/></svg>
<div class="a" style="left:89px;top:610px;width:16px;height:16px"><svg width="16" height="16" viewBox="0 0 16 16"><path d="M1 14.5 L12 4.5" stroke="#e01010" stroke-width="2"/><path d="M15 1.5 L9.5 3.5 L12.8 6.8 Z" fill="#e01010"/></svg></div>
<div class="row b" style="left:111px;top:609.5px;">Pose (move_base)</div>
<div class="a" style="left:311px;top:611px;width:16px;height:16px"><svg width="16" height="16" viewBox="0 0 16 16"><rect x=".75" y=".75" width="12.5" height="12.5" rx="2" fill="#f07a4c" stroke="#cf5c2e" stroke-width="1.5"/><path d="M3.5 6.8 L6.3 9.8 L14.5 1.2" fill="none" stroke="#7b3b22" stroke-width="2.4"/></svg></div>
<svg class="a" style="left:75px;top:632.5px" width="7" height="9" viewBox="0 0 7 9"><path d="M.6 .8 L6.3 4.5 L.6 8.2 Z" fill="#8a8a8a" stroke="#4a4a4a" stroke-width="1"/></svg>
<div class="a" style="left:89px;top:629px;width:16px;height:16px"><svg width="16" height="16" viewBox="0 0 16 16"><g stroke="#e01010" stroke-width="1.6" fill="none"><path d="M1.5 6 L13 2"/><path d="M2.5 10.5 L13.5 7"/><path d="M1 14.5 L12.5 12"/><path d="M6 2 L3 6.5"/><path d="M7 7 L4 11"/></g></svg></div>
<div class="row b" style="left:111px;top:628.5px;">ParticleCloud</div>
<div class="a" style="left:311px;top:630px;width:16px;height:16px"><svg width="16" height="16" viewBox="0 0 16 16"><rect x=".75" y=".75" width="12.5" height="12.5" rx="2" fill="#f07a4c" stroke="#cf5c2e" stroke-width="1.5"/><path d="M3.5 6.8 L6.3 9.8 L14.5 1.2" fill="none" stroke="#7b3b22" stroke-width="2.4"/></svg></div>
<svg class="a" style="left:75px;top:651.5px" width="7" height="9" viewBox="0 0 7 9"><path d="M.6 .8 L6.3 4.5 L.6 8.2 Z" fill="#8a8a8a" stroke="#4a4a4a" stroke-width="1"/></svg>
<div class="a" style="left:89px;top:648px;width:16px;height:16px"><svg width="16" height="16" viewBox="0 0 16 16"><path d="M1.5 14 Q3 10.5 7 10 Q10.5 9.5 10.5 6 Q11 3 14.5 2" fill="none" stroke="#22c022" stroke-width="2.2"/></svg></div>
<div class="row b" style="left:111px;top:647.5px;">Path (global)</div>
<div class="a" style="left:311px;top:649px;width:16px;height:16px"><svg width="16" height="16" viewBox="0 0 16 16"><rect x=".75" y=".75" width="12.5" height="12.5" rx="2" fill="#f07a4c" stroke="#cf5c2e" stroke-width="1.5"/><path d="M3.5 6.8 L6.3 9.8 L14.5 1.2" fill="none" stroke="#7b3b22" stroke-width="2.4"/></svg></div>
<svg class="a" style="left:75px;top:670.5px" width="7" height="9" viewBox="0 0 7 9"><path d="M.6 .8 L6.3 4.5 L.6 8.2 Z" fill="#8a8a8a" stroke="#4a4a4a" stroke-width="1"/></svg>
<div class="a" style="left:89px;top:667px;width:16px;height:16px"><svg width="16" height="16" viewBox="0 0 16 16"><g stroke="#e01010" stroke-width="1.6" fill="none"><path d="M1 9.5 L6.5 4"/><path d="M8.5 4 L14.5 13.5"/></g></svg></div>
<div class="row" style="left:111px;top:666.5px;">Odometry</div>
<div class="a" style="left:311px;top:668px;width:14px;height:14px"><svg width="14" height="14" viewBox="0 0 14 14"><rect x=".75" y=".75" width="12.5" height="12.5" rx="2" fill="#fff" stroke="#a6a39e" stroke-width="1.3"/></svg></div>
<svg class="a" style="left:75px;top:689.5px" width="7" height="9" viewBox="0 0 7 9"><path d="M.6 .8 L6.3 4.5 L.6 8.2 Z" fill="#8a8a8a" stroke="#4a4a4a" stroke-width="1"/></svg>
<div class="a" style="left:89px;top:686px;width:16px;height:16px"><svg width="16" height="16" viewBox="0 0 16 16"><path d="M1.5 3 L4.5 1.5 L7.5 3 L7.5 7 L4.5 8.5 L1.5 7Z" fill="#1db01d"/><path d="M8.5 4 L11.5 2.5 L14.5 4 L14.5 8 L11.5 9.5 L8.5 8Z" fill="#2050d8"/><path d="M3.5 9 L6.5 7.5 L9.5 9 L9.5 13 L6.5 14.5 L3.5 13Z" fill="#d81a1a"/></svg></div>
<div class="row" style="left:111px;top:685.5px;">EBand boubles</div>
<div class="a" style="left:311px;top:687px;width:14px;height:14px"><svg width="14" height="14" viewBox="0 0 14 14"><rect x=".75" y=".75" width="12.5" height="12.5" rx="2" fill="#fff" stroke="#a6a39e" stroke-width="1.3"/></svg></div><!--TREEEND-->
<div id="view" class="a"></div>
<!--MAPSTART--><svg class="a" style="left:568px;top:92px" width="1336" height="958" viewBox="568 92 1336 958">
<defs><linearGradient id="lc" gradientUnits="userSpaceOnUse" x1="1060" y1="455" x2="1060" y2="598"><stop offset="0" stop-color="#f6d0c6"/><stop offset=".38" stop-color="#f0eac4"/><stop offset=".7" stop-color="#d2f0dc"/><stop offset="1" stop-color="#cadcf4"/></linearGradient>
<linearGradient id="lc2" gradientUnits="userSpaceOnUse" x1="988" y1="0" x2="1128" y2="0"><stop offset="0" stop-color="#b8f0c0" stop-opacity=".6"/><stop offset=".5" stop-color="#f0d0c0" stop-opacity="0"/><stop offset="1" stop-color="#c0f0c8" stop-opacity=".5"/></linearGradient>
<pattern id="dots" width="5" height="4.4" patternUnits="userSpaceOnUse" patternTransform="rotate(-12)"><circle cx="2.5" cy="2.2" r="1.5" fill="none" stroke="#a8a0c0" stroke-width=".6" stroke-opacity=".55"/></pattern></defs>
<polygon points="576,349.25 1524.25,222 1611.5,821 644.2,953.6" fill="#c1c1c1"/>
<clipPath id="mc"><polygon points="576,349.25 1524.25,222 1611.5,821 644.2,953.6"/></clipPath>
<g fill="none" stroke-linecap="round" stroke-linejoin="round" clip-path="url(#mc)">
<path d="M1032.5,300.75 L1365.5,257.5 L1453.75,467.5 M1436.25,471.5 L1542.5,457.5 L1510.9,686.8 L1115,740 M1012.5,757 L879.4,775 M876,548.75 L851.25,552 L832.5,401.25 L599.5,433.25 L650.5,876.6 L896.6,907.5 L885,810 M882.75,638.75 L865.6,641.25 L876.9,736 M623,627 L858.5,596 M858.5,590 L858.5,603 M922.25,634.4 L966.5,627.5 M955,630 L971.9,759.75 M1003.5,623 L1034.75,618.5 M1023.5,620.6 L1040.6,751.25 M1073,612.75 L1117,607.75 M1105.5,609 L1122.5,739 M1156.25,602 L1178.75,598.5 M1168,600.25 L1185,730.25 M1235.25,564.4 L1257,721.5 M1217.25,593.75 L1238.5,590.25 M983,534.6 L1018.75,529.6 M1081,522.75 L1228.75,503.5 M1107,496.5 L1111,535 M1225.75,479.5 L1230.5,519.5 M637,456 L686,448 M990,528 L1050,518 M1097,575 L1117,569 L1118,576 L1098,582 Z M1033,590 L1068,583 M1006,605 A6,6 0 1,1 994,605 A6,6 0 1,1 1006,605 M1028,607 L1038,604 M977.5,626 L977.6,626 M1037.5,644 L1038,656 M1098,502 L1110,496" stroke="#c5bdd2" stroke-width="33"/>
<path d="M1034,304 L1018,485" stroke="#c5bdd2" stroke-width="23.8" stroke-linecap="butt"/>
<path d="M1032.5,300.75 L1365.5,257.5 L1453.75,467.5 M1436.25,471.5 L1542.5,457.5 L1510.9,686.8 L1115,740 M1012.5,757 L879.4,775 M876,548.75 L851.25,552 L832.5,401.25 L599.5,433.25 L650.5,876.6 L896.6,907.5 L885,810 M882.75,638.75 L865.6,641.25 L876.9,736 M623,627 L858.5,596 M858.5,590 L858.5,603 M922.25,634.4 L966.5,627.5 M955,630 L971.9,759.75 M1003.5,623 L1034.75,618.5 M1023.5,620.6 L1040.6,751.25 M1073,612.75 L1117,607.75 M1105.5,609 L1122.5,739 M1156.25,602 L1178.75,598.5 M1168,600.25 L1185,730.25 M1235.25,564.4 L1257,721.5 M1217.25,593.75 L1238.5,590.25 M983,534.6 L1018.75,529.6 M1081,522.75 L1228.75,503.5 M1107,496.5 L1111,535 M1225.75,479.5 L1230.5,519.5 M637,456 L686,448 M990,528 L1050,518 M1097,575 L1117,569 L1118,576 L1098,582 Z M1033,590 L1068,583 M1006,605 A6,6 0 1,1 994,605 A6,6 0 1,1 1006,605 M1028,607 L1038,604 M977.5,626 L977.6,626 M1037.5,644 L1038,656 M1098,502 L1110,496" stroke="#c9bccd" stroke-width="27"/>
<path d="M1034,304 L1018,485" stroke="#c9bccd" stroke-width="19.4" stroke-linecap="butt"/>
<path d="M1032.5,300.75 L1365.5,257.5 L1453.75,467.5 M1436.25,471.5 L1542.5,457.5 L1510.9,686.8 L1115,740 M1012.5,757 L879.4,775 M876,548.75 L851.25,552 L832.5,401.25 L599.5,433.25 L650.5,876.6 L896.6,907.5 L885,810 M882.75,638.75 L865.6,641.25 L876.9,736 M623,627 L858.5,596 M858.5,590 L858.5,603 M922.25,634.4 L966.5,627.5 M955,630 L971.9,759.75 M1003.5,623 L1034.75,618.5 M1023.5,620.6 L1040.6,751.25 M1073,612.75 L1117,607.75 M1105.5,609 L1122.5,739 M1156.25,602 L1178.75,598.5 M1168,600.25 L1185,730.25 M1235.25,564.4 L1257,721.5 M1217.25,593.75 L1238.5,590.25 M983,534.6 L1018.75,529.6 M1081,522.75 L1228.75,503.5 M1107,496.5 L1111,535 M1225.75,479.5 L1230.5,519.5 M637,456 L686,448 M990,528 L1050,518 M1097,575 L1117,569 L1118,576 L1098,582 Z M1033,590 L1068,583 M1006,605 A6,6 0 1,1 994,605 A6,6 0 1,1 1006,605 M1028,607 L1038,604 M977.5,626 L977.6,626 M1037.5,644 L1038,656 M1098,502 L1110,496" stroke="#cfbcc7" stroke-width="21"/>
<path d="M1034,304 L1018,485" stroke="#cfbcc7" stroke-width="15.1" stroke-linecap="butt"/>
<path d="M1032.5,300.75 L1365.5,257.5 L1453.75,467.5 M1436.25,471.5 L1542.5,457.5 L1510.9,686.8 L1115,740 M1012.5,757 L879.4,775 M876,548.75 L851.25,552 L832.5,401.25 L599.5,433.25 L650.5,876.6 L896.6,907.5 L885,810 M882.75,638.75 L865.6,641.25 L876.9,736 M623,627 L858.5,596 M858.5,590 L858.5,603 M922.25,634.4 L966.5,627.5 M955,630 L971.9,759.75 M1003.5,623 L1034.75,618.5 M1023.5,620.6 L1040.6,751.25 M1073,612.75 L1117,607.75 M1105.5,609 L1122.5,739 M1156.25,602 L1178.75,598.5 M1168,600.25 L1185,730.25 M1235.25,564.4 L1257,721.5 M1217.25,593.75 L1238.5,590.25 M983,534.6 L1018.75,529.6 M1081,522.75 L1228.75,503.5 M1107,496.5 L1111,535 M1225.75,479.5 L1230.5,519.5 M637,456 L686,448 M990,528 L1050,518 M1097,575 L1117,569 L1118,576 L1098,582 Z M1033,590 L1068,583 M1006,605 A6,6 0 1,1 994,605 A6,6 0 1,1 1006,605 M1028,607 L1038,604 M977.5,626 L977.6,626 M1037.5,644 L1038,656 M1098,502 L1110,496" stroke="#d3bdc4" stroke-width="17"/>
<path d="M1034,304 L1018,485" stroke="#d3bdc4" stroke-width="12.2" stroke-linecap="butt"/>
<g opacity=".88"><polygon points="988,480 1106,455.5 1128,573 1010,598" fill="url(#lc)"/><polygon points="988,480 1106,455.5 1128,573 1010,598" fill="url(#lc2)"/><polygon points="988,480 1106,455.5 1128,573 1010,598" fill="url(#dots)"/></g>
<path d="M1032.5,300.75 L1365.5,257.5 L1453.75,467.5 M1436.25,471.5 L1542.5,457.5 L1510.9,686.8 L1115,740 M1012.5,757 L879.4,775 M876,548.75 L851.25,552 L832.5,401.25 L599.5,433.25 L650.5,876.6 L896.6,907.5 L885,810 M882.75,638.75 L865.6,641.25 L876.9,736 M623,627 L858.5,596 M858.5,590 L858.5,603 M922.25,634.4 L966.5,627.5 M955,630 L971.9,759.75 M1003.5,623 L1034.75,618.5 M1023.5,620.6 L1040.6,751.25 M1073,612.75 L1117,607.75 M1105.5,609 L1122.5,739 M1156.25,602 L1178.75,598.5 M1168,600.25 L1185,730.25 M1235.25,564.4 L1257,721.5 M1217.25,593.75 L1238.5,590.25 M983,534.6 L1018.75,529.6 M1081,522.75 L1228.75,503.5 M1107,496.5 L1111,535 M1225.75,479.5 L1230.5,519.5 M637,456 L686,448 M990,528 L1050,518 M1097,575 L1117,569 L1118,576 L1098,582 Z M1033,590 L1068,583 M1006,605 A6,6 0 1,1 994,605 A6,6 0 1,1 1006,605 M1028,607 L1038,604 M977.5,626 L977.6,626 M1037.5,644 L1038,656 M1098,502 L1110,496" stroke="#badcdb" stroke-width="14"/>
<path d="M1034,304 L1018,485" stroke="#badcdb" stroke-width="12" stroke-linecap="butt"/>
<path d="M637,456 L686,448 M990,528 L1050,518 M1097,575 L1117,569 L1118,576 L1098,582 Z M1033,590 L1068,583 M1006,605 A6,6 0 1,1 994,605 A6,6 0 1,1 1006,605 M1028,607 L1038,604 M977.5,626 L977.6,626 M1037.5,644 L1038,656 M1098,502 L1110,496" stroke="#e2d8bc" stroke-width="3"/>
</g>
<g fill="none" stroke-linecap="round" stroke-linejoin="round">
<path d="M876.9,736 L885,810 M1012.5,757 L1115,740" stroke="#5f7f7f" stroke-width="2"/>
<path d="M1032.5,300.75 L1365.5,257.5 L1453.75,467.5 M1436.25,471.5 L1542.5,457.5 L1510.9,686.8 L1115,740 M1012.5,757 L879.4,775 M876,548.75 L851.25,552 L832.5,401.25 L599.5,433.25 L650.5,876.6 L896.6,907.5 L885,810 M882.75,638.75 L865.6,641.25 L876.9,736 M623,627 L858.5,596 M858.5,590 L858.5,603 M922.25,634.4 L966.5,627.5 M955,630 L971.9,759.75 M1003.5,623 L1034.75,618.5 M1023.5,620.6 L1040.6,751.25 M1073,612.75 L1117,607.75 M1105.5,609 L1122.5,739 M1156.25,602 L1178.75,598.5 M1168,600.25 L1185,730.25 M1235.25,564.4 L1257,721.5 M1217.25,593.75 L1238.5,590.25 M983,534.6 L1018.75,529.6 M1081,522.75 L1228.75,503.5 M1107,496.5 L1111,535 M1225.75,479.5 L1230.5,519.5 M1032.5,300.75 L1012.5,529" stroke="#1c1a0c" stroke-width="1.45" stroke-linecap="butt"/>
</g>
<path d="M1066,528 L1072,516 C1077,506 1077,500 1079,492 C1082,484 1088,477 1093,470 L1193.75,322" fill="none" stroke="#22f022" stroke-width="1.1"/>
<path d="M1065.5,529 L1071,518 C1076,509 1075,500 1075,492 C1076,484 1081,479 1086.5,474" fill="none" stroke="#f02020" stroke-width="1.2"/>
<path d="M1193.75,322 L1200.5,357" stroke="#ff2a10" stroke-width="1.6"/>
<g fill="#f4f4f4"><rect x="1046" y="588" width="1.2" height="1.2"/><rect x="1050" y="587" width="1.2" height="1.2"/><rect x="1054" y="586" width="1.2" height="1.2"/><rect x="1058" y="585" width="1.2" height="1.2"/><rect x="1062" y="584" width="1.2" height="1.2"/><rect x="1066" y="583" width="1.2" height="1.2"/><rect x="1010" y="597" width="1.2" height="1.2"/><rect x="1013" y="599" width="1.2" height="1.2"/><rect x="1012" y="612" width="1.2" height="1.2"/><rect x="1013" y="617" width="1.2" height="1.2"/><rect x="1015" y="625" width="1.2" height="1.2"/><rect x="1016" y="631" width="1.2" height="1.2"/><rect x="1018" y="638" width="1.2" height="1.2"/><rect x="1019" y="644" width="1.2" height="1.2"/><rect x="1083" y="681" width="1.2" height="1.2"/><rect x="1087" y="680" width="1.2" height="1.2"/><rect x="1091" y="679" width="1.2" height="1.2"/><rect x="1095" y="678" width="1.2" height="1.2"/><rect x="1099" y="677" width="1.2" height="1.2"/><rect x="1103" y="676" width="1.2" height="1.2"/><rect x="1107" y="675" width="1.2" height="1.2"/><rect x="1088" y="673" width="1.2" height="1.2"/></g>
<g fill="#1cc21c"><rect x="1062.8" y="547.0" width="1.6" height="1.6"/><rect x="1059.9" y="546.0" width="1.6" height="1.6"/><rect x="1061.8" y="541.0" width="1.6" height="1.6"/><rect x="1067.8" y="542.6" width="1.6" height="1.6"/><rect x="1062.4" y="544.9" width="1.6" height="1.6"/><rect x="1065.7" y="541.9" width="1.6" height="1.6"/><rect x="1064.1" y="538.1" width="1.6" height="1.6"/><rect x="1061.5" y="540.2" width="1.6" height="1.6"/><rect x="1058.8" y="536.0" width="1.6" height="1.6"/><rect x="1057.9" y="541.0" width="1.6" height="1.6"/><rect x="1062.0" y="540.7" width="1.6" height="1.6"/><rect x="1062.7" y="536.7" width="1.6" height="1.6"/><rect x="1062.3" y="543.0" width="1.6" height="1.6"/><rect x="1064.6" y="538.6" width="1.6" height="1.6"/><rect x="1061.4" y="533.9" width="1.6" height="1.6"/><rect x="1061.1" y="533.2" width="1.6" height="1.6"/><rect x="1058.5" y="546.4" width="1.6" height="1.6"/><rect x="1056.3" y="545.2" width="1.6" height="1.6"/><rect x="1063.4" y="540.8" width="1.6" height="1.6"/><rect x="1063.8" y="544.1" width="1.6" height="1.6"/><rect x="1065.4" y="541.1" width="1.6" height="1.6"/><rect x="1060.8" y="539.6" width="1.6" height="1.6"/><rect x="1059.7" y="541.8" width="1.6" height="1.6"/><rect x="1060.3" y="546.3" width="1.6" height="1.6"/><rect x="1057.3" y="537.6" width="1.6" height="1.6"/><rect x="1059.8" y="533.6" width="1.6" height="1.6"/><rect x="1067.8" y="532.4" width="1.6" height="1.6"/><rect x="1061.7" y="539.9" width="1.6" height="1.6"/><rect x="1067.1" y="534.1" width="1.6" height="1.6"/><rect x="1065.5" y="539.1" width="1.6" height="1.6"/><rect x="1062.1" y="539.3" width="1.6" height="1.6"/><rect x="1064.3" y="537.4" width="1.6" height="1.6"/><rect x="1062.3" y="543.4" width="1.6" height="1.6"/><rect x="1067.7" y="532.4" width="1.6" height="1.6"/><rect x="1066.8" y="545.8" width="1.6" height="1.6"/><rect x="1061.1" y="543.2" width="1.6" height="1.6"/><rect x="1061.2" y="548.6" width="1.6" height="1.6"/><rect x="1063.1" y="541.1" width="1.6" height="1.6"/><rect x="1061.9" y="541.2" width="1.6" height="1.6"/><rect x="1062.0" y="538.5" width="1.6" height="1.6"/><rect x="1068.3" y="534.4" width="1.6" height="1.6"/><rect x="1052.4" y="541.5" width="1.6" height="1.6"/><rect x="1062.1" y="543.5" width="1.6" height="1.6"/><rect x="1061.9" y="541.4" width="1.6" height="1.6"/><rect x="1063.4" y="545.9" width="1.6" height="1.6"/><rect x="1061.2" y="540.5" width="1.6" height="1.6"/><rect x="1067.9" y="544.1" width="1.6" height="1.6"/><rect x="1059.7" y="551.3" width="1.6" height="1.6"/><rect x="1064.7" y="539.6" width="1.6" height="1.6"/><rect x="1059.2" y="543.2" width="1.6" height="1.6"/><rect x="1060.2" y="537.8" width="1.6" height="1.6"/><rect x="1058.9" y="540.0" width="1.6" height="1.6"/><rect x="1065.6" y="540.3" width="1.6" height="1.6"/><rect x="1058.4" y="544.7" width="1.6" height="1.6"/><rect x="1062.7" y="545.4" width="1.6" height="1.6"/><rect x="1065.9" y="541.3" width="1.6" height="1.6"/><rect x="1062.1" y="541.8" width="1.6" height="1.6"/><rect x="1059.3" y="544.7" width="1.6" height="1.6"/><rect x="1066.3" y="542.7" width="1.6" height="1.6"/><rect x="1061.8" y="541.0" width="1.6" height="1.6"/><path d="M1058,537 L1064,536 L1067,542 L1066,548 L1061,547 Z"/></g>
<circle cx="1060" cy="530.5" r="5.6" fill="#2a2a2a"/>
</svg><!--MAPEND-->
<div id="status" class="a"></div>
<div class="a" style="left:65px;top:1080px;width:1855px;height:17px;background:linear-gradient(#626262,#b0b0b0)"></div>
<div class="a" style="left:255px;top:1080px;width:1665px;height:16px;background:linear-gradient(#707070,#bababa);border-left:1px solid #5a5a5a"></div>
<!--CHROMESTART--><div class="a" style="left:6px;top:4px;font-size:14px;line-height:16px;font-weight:bold;letter-spacing:.5px;color:#dfdbd2;white-space:nowrap">robot_navigation.rviz* - RViz</div>
<svg class="a" style="left:1730px;top:3px" width="19" height="19" viewBox="0 0 19 19"><path d="M5 2 L9.5 7 H6.8 V14 H3.2 V7 H.5 Z" fill="#dfdbd2"/><path d="M12.5 17 L17.5 12 H14.8 V5 H11.2 V12 H8.5 Z" fill="#dfdbd2"/></svg>
<div class="a" style="left:1761px;top:2px;width:20px;height:20px;border-radius:2px;background:#dcd8d1;color:#3c3b37;font-size:13.5px;line-height:21px;text-align:center">De</div>
<svg class="a" style="left:1791px;top:3px" width="12" height="18" viewBox="0 0 12 18"><path d="M2 5 L9.5 12 L5.5 16 V2 L9.5 6 L2 13" fill="none" stroke="#dfdbd2" stroke-width="1.5"/></svg>
<svg class="a" style="left:1814px;top:4px" width="21" height="17" viewBox="0 0 21 17"><path d="M1 6 H4 L9 2 V15 L4 11 H1 Z" fill="#dfdbd2"/><path d="M11.5 5.5 Q13 8.5 11.5 11.5 M14 3.5 Q16.5 8.5 14 13.5 M16.5 1.5 Q20 8.5 16.5 15.5" fill="none" stroke="#dfdbd2" stroke-width="1.4"/></svg>
<div class="a" style="left:1847px;top:4px;font-size:14px;line-height:16px;color:#dfdbd2;white-space:nowrap">23:12</div>
<svg class="a" style="left:1895px;top:3px" width="18" height="19" viewBox="0 0 18 19"><g stroke="#dfdbd2" stroke-width="2.2"><path d="M3.2 5.5 L4.6 6.9 M14.8 5.5 L13.4 6.9 M1 11 H3 M15 11 H17 M3.2 16.5 L4.6 15.1 M14.8 16.5 L13.4 15.1 M9 16.5 V18.5"/></g><circle cx="9" cy="11" r="5.4" fill="none" stroke="#dfdbd2" stroke-width="2.4"/><path d="M9 2 V10" stroke="#45443f" stroke-width="4.2"/><path d="M9 1.5 V9.5" stroke="#dfdbd2" stroke-width="2"/></svg>
<div class="a" style="left:138px;top:30.5px;font-size:14px;line-height:16px;font-weight:bold;letter-spacing:.5px;color:#dfdbd2;white-space:nowrap">robot_navigation.rviz* - RViz</div>
<svg class="a" style="left:72px;top:30px" width="56" height="17" viewBox="0 0 56 17"><defs><linearGradient id="cg" x1="0" y1="0" x2="0" y2="1"><stop offset="0" stop-color="#f3855a"/><stop offset="1" stop-color="#df5420"/></linearGradient><linearGradient id="gg" x1="0" y1="0" x2="0" y2="1"><stop offset="0" stop-color="#7a7973"/><stop offset="1" stop-color="#5a5955"/></linearGradient></defs><circle cx="8.5" cy="8.3" r="7.5" fill="url(#cg)" stroke="#3a2a22" stroke-width=".6"/><path d="M5.6 5.4 L11.4 11.2 M11.4 5.4 L5.6 11.2" stroke="#3a1a10" stroke-width="1.3"/><circle cx="27.5" cy="8.3" r="7.5" fill="url(#gg)" stroke="#35342f" stroke-width=".6"/><path d="M24 8.4 H31" stroke="#2f2e2a" stroke-width="1.5"/><circle cx="46.3" cy="8.3" r="7.5" fill="url(#gg)" stroke="#35342f" stroke-width=".6"/><rect x="43.3" y="5.3" width="6" height="6" fill="none" stroke="#2f2e2a" stroke-width="1.3"/></svg>
<div class="a" style="left:69px;top:66px;width:5px;height:11px;background:repeating-linear-gradient(#c8c4be 0 1px,#fff 1px 2px,transparent 2px 4px)"></div>
<div class="a" style="left:77px;top:55px;width:114px;height:34px;border:1px solid #aaa69f;border-radius:4px;background:linear-gradient(#f3f2f1,#e2e0dd)"></div>
<div class="a" style="left:102.5px;top:66px;font-size:12px;line-height:14px;color:#3c3c3c;white-space:nowrap">Move Camera</div>
<svg class="a" style="left:81px;top:64px" width="17" height="16" viewBox="0 0 17 16"><path d="M8.5 .5 L11 3 H9.5 V6 H14 V4.5 L16.5 7 L14 9.5 V8 H9.5 V12.5 H11 L8.5 15.5 L6 12.5 H7.5 V8 H3 V9.5 L.5 7 L3 4.5 V6 H7.5 V3 H6 Z" fill="#fff" stroke="#333" stroke-width=".9"/></svg>
<svg class="a" style="left:196px;top:63px" width="18" height="17" viewBox="0 0 18 17"><path d="M4.5 16 L1.5 10.5 Q1 9 2.5 9 L4 10.5 V2 Q4 .8 5.2 .8 Q6.3 .8 6.3 2 V7 Q6.5 6 7.6 6 Q8.8 6 8.8 7.3 Q9.2 6.5 10.2 6.6 Q11.3 6.7 11.3 8 Q11.8 7.3 12.7 7.5 Q13.7 7.7 13.7 9 V12.5 L12.5 16 Z" fill="#fff" stroke="#111" stroke-width="1.1"/></svg>
<div class="a" style="left:217px;top:66px;font-size:12px;line-height:14px;color:#3c3c3c;white-space:nowrap">Interact</div>
<div class="a" style="left:281px;top:65px;width:16px;height:13px;background:#fbf6c6;border:1px dashed #333"></div>
<div class="a" style="left:294px;top:75px;width:3px;height:3px;background:#111"></div>
<div class="a" style="left:300.5px;top:66px;font-size:12px;line-height:14px;color:#3c3c3c;white-space:nowrap">Select</div>
<svg class="a" style="left:355px;top:64px" width="17" height="15" viewBox="0 0 17 15"><path d="M1 14 L12 4.5" stroke="#18b018" stroke-width="2"/><path d="M16 1 L10 2.5 L13.5 6.5 Z" fill="#22d422" stroke="#118811" stroke-width=".6"/></svg>
<div class="a" style="left:375.5px;top:66px;font-size:12px;line-height:14px;color:#3c3c3c;white-space:nowrap">2D Pose Estimate</div>
<svg class="a" style="left:492px;top:64px" width="17" height="15" viewBox="0 0 17 15"><path d="M1 14 L12 4.5" stroke="#18b018" stroke-width="2"/><path d="M16 1 L10 2.5 L13.5 6.5 Z" fill="#22d422" stroke="#118811" stroke-width=".6"/></svg>
<div class="a" style="left:513px;top:66px;font-size:12px;line-height:14px;color:#3c3c3c;white-space:nowrap">2D Nav Goal</div>
<svg class="a" style="left:600px;top:67px" width="18" height="8" viewBox="0 0 18 8"><rect x=".5" y=".5" width="17" height="7" fill="#eee3a0" stroke="#5a5a50" stroke-width="1"/><path d="M3 1 V4 M5.5 1 V3 M8 1 V4 M10.5 1 V3 M13 1 V4 M15.5 1 V3" stroke="#5a5a50" stroke-width=".8"/></svg>
<div class="a" style="left:621px;top:66px;font-size:12px;line-height:14px;color:#3c3c3c;white-space:nowrap">Measure</div>
<svg class="a" style="left:690px;top:65px" width="14" height="14" viewBox="0 0 14 14"><path d="M5 1 H9 V5 H13 V9 H9 V13 H5 V9 H1 V5 H5 Z" fill="#9cc0ea" stroke="#2f68b8" stroke-width="1.1"/></svg>
<svg class="a" style="left:734px;top:69px" width="14" height="7" viewBox="0 0 14 7"><rect x=".8" y=".8" width="12.4" height="5.4" rx="1" fill="#9cc0ea" stroke="#2f68b8" stroke-width="1.1"/></svg>
<svg class="a" style="left:753px;top:73px" width="8" height="5" viewBox="0 0 8 5"><path d="M0 0 H8 L4 5Z" fill="#7a7a7a"/></svg>
<svg class="a" style="left:69px;top:95px" width="17" height="17" viewBox="0 0 17 17"><defs><linearGradient id="mg" x1="0" x2="1"><stop offset="0" stop-color="#d08080"/><stop offset=".5" stop-color="#80c080"/><stop offset="1" stop-color="#9090e0"/></linearGradient></defs><rect x="1" y="1" width="15" height="11" fill="url(#mg)" stroke="#111" stroke-width="1.4"/><path d="M8.5 12 V14.5 M4.5 15.5 H12.5" stroke="#111" stroke-width="1.6"/></svg>
<div class="a" style="left:91px;top:95px;font-size:14.5px;line-height:16px;color:#4a4a4a;white-space:nowrap">Displays</div>
<div class="a" style="left:530px;top:96px;width:12px;height:14px;border-radius:3px;background:#fff;border:1px solid #b9b4ad"></div>
<svg class="a" style="left:531px;top:98px" width="10" height="10" viewBox="0 0 10 10"><path d="M2 2 L8 8 M8 2 L2 8" stroke="#5a5a5a" stroke-width="2.4"/></svg>
<div class="a" style="left:547px;top:568px;width:4px;height:1px;background:#c0bab4"></div>
<div class="a" style="left:547px;top:571px;width:4px;height:1px;background:#c0bab4"></div>
<div class="a" style="left:547px;top:574px;width:4px;height:1px;background:#c0bab4"></div>
<svg class="a" style="left:557px;top:567px" width="6" height="9" viewBox="0 0 6 9"><path d="M5.5 .5 V8.5 L.5 4.5 Z" fill="#999" stroke="#555" stroke-width=".8"/></svg>
<div class="a" style="left:567px;top:91px;width:1px;height:959px;background:#fff"></div>
<div class="a" style="left:567px;top:91px;width:1337px;height:1px;background:#fff"></div>
<div class="a" style="left:1904px;top:92px;width:1px;height:958px;background:#fff"></div>
<svg class="a" style="left:1910px;top:567px" width="6" height="9" viewBox="0 0 6 9"><path d="M.5 .5 V8.5 L5.5 4.5 Z" fill="#999" stroke="#555" stroke-width=".8"/></svg>
<div class="a" style="left:302px;top:929px;width:1px;height:4px;background:#c8c3bd"></div>
<div class="a" style="left:305px;top:929px;width:1px;height:4px;background:#c8c3bd"></div>
<div class="a" style="left:308px;top:929px;width:1px;height:4px;background:#c8c3bd"></div>
<div class="btn" style="left:68px;width:112px">Add</div>
<div class="btn dis" style="left:189px;width:112px">Duplicate</div>
<div class="btn dis" style="left:310px;width:112px">Remove</div>
<div class="btn dis" style="left:430px;width:112px">Rename</div>
<div class="a" style="left:68px;top:1054px;width:49px;height:23px;border:1px solid #b8b4ae;border-radius:3px;background:linear-gradient(#fafaf9,#efeeec);font-size:14px;line-height:21px;text-align:center;color:#3c3c3c">Reset</div>
<div class="a" style="left:125px;top:1058px;font-size:14.8px;line-height:17px;color:#3c3c3c;white-space:nowrap"><b>Left-Click:</b> Rotate. <b>Middle-Click:</b> Move X/Y. <b>Right-Click/Mouse Wheel:</b>: Zoom. <b>Shift</b>: More options.</div>
<div class="a" style="left:1856px;top:1054px;font-size:14.5px;line-height:17px;color:#3c3c3c;white-space:nowrap">30 fps</div>
<svg class="a" style="left:1907px;top:1066px" width="12" height="12" viewBox="0 0 12 12"><g fill="#d6d2cc"><rect x="9" y="1" width="2" height="2"/><rect x="6" y="4" width="2" height="2"/><rect x="9" y="4" width="2" height="2"/><rect x="3" y="7" width="2" height="2"/><rect x="6" y="7" width="2" height="2"/><rect x="9" y="7" width="2" height="2"/><rect x="0" y="10" width="2" height="2"/><rect x="3" y="10" width="2" height="2"/><rect x="6" y="10" width="2" height="2"/><rect x="9" y="10" width="2" height="2"/></g></svg><!--CHROMEEND-->
</body></html>
